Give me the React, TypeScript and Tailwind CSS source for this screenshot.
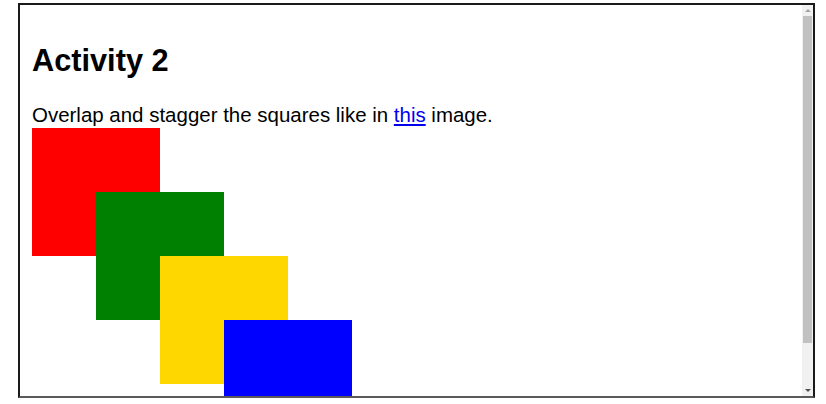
import React from "react";

const squares = [
  { color: "bg-[#ff0000]", ml: "ml-0", mt: "mt-0" },
  { color: "bg-[#008000]", ml: "ml-[64px]", mt: "-mt-[64px]" },
  { color: "bg-[#ffd700]", ml: "ml-[128px]", mt: "-mt-[64px]" },
  { color: "bg-[#0000ff]", ml: "ml-[192px]", mt: "-mt-[64px]" },
];

export default function App() {
  return (
    <div className="w-[826px] h-[404px] bg-white overflow-hidden" style={{ fontFamily: '"Liberation Sans", Arial, sans-serif' }}>
      <div className="ml-[18px] mt-[3px] w-[797px] h-[395px] border-2 border-[#1a1a1a] border-b-[#5a5a5a] flex overflow-hidden">
        {/* page inside the frame */}
        <div className="flex-1 overflow-hidden pl-[12px]">
          <h1 className="mt-[37.7px] text-[30.72px] font-bold leading-[35.3px] text-black">Activity 2</h1>
          <p className="mt-[25px] text-[20.48px] leading-[23.5px] text-black">
            Overlap and stagger the squares like in{" "}
            <a href="#" className="text-[#0000ee] underline">this</a> image.
          </p>
          <div className="mt-[2px]">
            {squares.map((s, i) => (
              <div key={i} className={`relative w-[128px] h-[128px] ${s.color} ${s.ml} ${s.mt}`} />
            ))}
          </div>
        </div>
        {/* scrollbar */}
        <div className="w-[11px] bg-[#f1f1f1] flex flex-col">
          <div className="h-[11px] flex items-center justify-center">
            <div className="w-0 h-0 border-l-[3px] border-r-[3px] border-b-[3px] border-l-transparent border-r-transparent border-b-[#a3a3a3]" />
          </div>
          <div className="h-[327px] mx-[1px] bg-[#c1c1c1]" />
          <div className="flex-1" />
          <div className="h-[11px] flex items-center justify-center">
            <div className="w-0 h-0 border-l-[3px] border-r-[3px] border-t-[3px] border-l-transparent border-r-transparent border-t-[#505050]" />
          </div>
        </div>
      </div>
    </div>
  );
}
